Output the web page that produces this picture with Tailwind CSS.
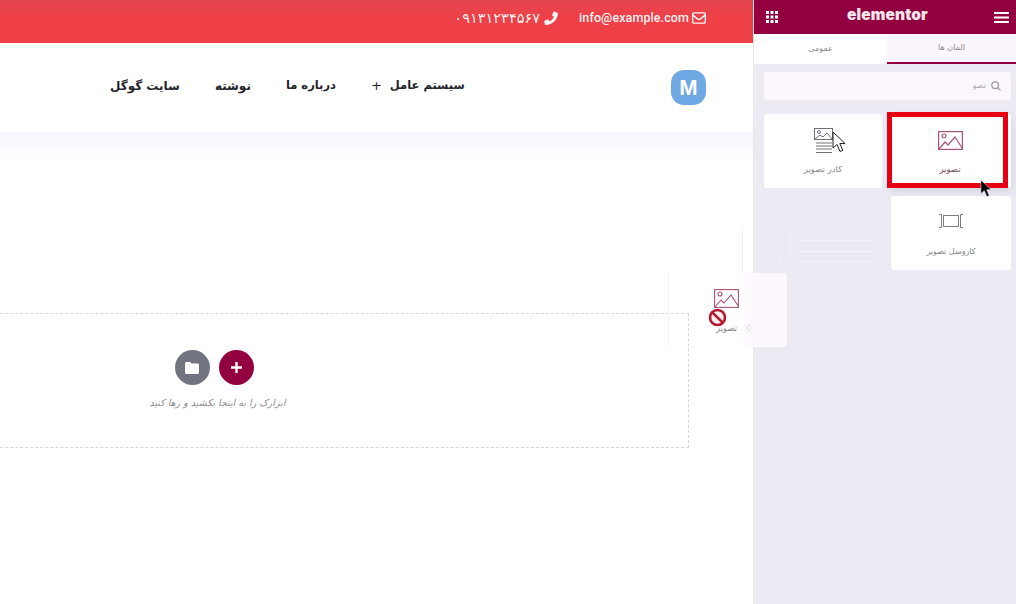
<!DOCTYPE html>
<html lang="fa">

<head>
  <meta charset="UTF-8">
  <meta name="viewport" content="width=device-width, initial-scale=1.0">
  <script src="https://cdn.jsdelivr.net/npm/@tailwindcss/browser@4"></script>
  <title>Elementor</title>
</head>

<body class="font-['DejaVu_Sans','Noto_Sans',sans-serif]">

  <div class="relative flex w-[1016px] h-[604px] overflow-hidden bg-white">

    <!-- page preview -->
    <main class="w-[753px] shrink-0 flex flex-col">
      <div class="h-[43px] shrink-0 flex items-center justify-end gap-[21px] pr-[47px] pb-[7px] bg-gradient-to-b from-[#e2454f] to-[#ef4047] to-[40%] text-white/95">
        <div class="flex items-center gap-[4px]">
          <span class="text-[14.5px] leading-none">۰۹۱۳۱۲۳۴۵۶۷</span>
          <svg class="w-[14px] h-[14px]" viewBox="0 0 24 24" fill="currentColor"><path d="M23 3.500 18 1c-.7-.3-1.400 0-1.700.6l-2.200 5c-.3.6-.1 1.200.4 1.600l2.500 2c-1.500 3.200-4.100 5.800-7.300 7.300l-2-2.500c-.4-.5-1-.7-1.600-.4l-5 2.200c-.6.3-.9 1-.6 1.700L1.600 23c.2.600.9 1 1.500 1C14.400 24 24 14.500 24 3.500c0-.1-.4 0-1 0z"/></svg>
        </div>
        <div class="flex items-center gap-[3px]">
          <span class="font-['Roboto',sans-serif] text-[12.5px] tracking-[0.1px] font-medium">info@example.com</span>
          <svg class="w-[14px] h-[12px]" viewBox="0 0 24 20" fill="none" stroke="currentColor" stroke-width="2.400"><rect x="1.200" y="1.200" width="21.600" height="17.600" rx="2"/><path d="M1.500 5l8 6.500c1.500 1.200 3.500 1.200 5 0l8-6.500"/></svg>
        </div>
      </div>

      <nav class="h-[89px] shrink-0 flex items-center justify-between pl-[110px] pr-[47px]">
        <div dir="rtl" class="flex items-center gap-[35px] text-[12px] font-bold text-[#24242c] pb-[3px]">
          <span class="flex items-center gap-[8px] text-[11.5px]">سیستم عامل<span class="font-normal text-[13px]">+</span></span>
          <span class="text-[11.5px]">درباره ما</span>
          <span>نوشته</span>
          <span>سایت گوگل</span>
        </div>
        <div class="w-[35px] h-[35px] flex items-center justify-center rounded-[13px] bg-[#6ea8e2] text-white text-[22px] font-bold font-['Liberation_Sans',sans-serif]">M</div>
      </nav>

      <div class="flex-1 bg-gradient-to-b from-[#f9f5fd] to-white to-[30px] pt-[181px]">
        <div class="-ml-[260px] w-[949px] h-[135px] border-r border-y border-dashed border-[#d5d7da] flex flex-col items-center pt-[36px]">
          <div class="flex items-center gap-[9px]">
            <div class="w-[35px] h-[35px] rounded-full bg-[#727580] flex items-center justify-center">
              <svg class="w-[14px] h-[12px]" viewBox="0 0 14 12" fill="white"><path d="M1.500 0h3.800l1.400 1.500h5.800c.8 0 1.500.7 1.500 1.500v7.500c0 .8-.7 1.500-1.500 1.500h-11C.7 12 0 11.300 0 10.500v-9C0 .7.700 0 1.500 0z"/></svg>
            </div>
            <div class="w-[35px] h-[35px] rounded-full bg-[#93003f] flex items-center justify-center">
              <svg class="w-[11px] h-[11px]" viewBox="0 0 11 11" fill="white"><path d="M4.300 0h2.400v4.300H11v2.400H6.700V11H4.300V6.700H0V4.300h4.300z"/></svg>
            </div>
          </div>
          <p dir="rtl" class="mt-[11px] ml-[7px] text-[9.5px] italic text-[#8a8a90]">ابزارک را به اینجا بکشید و رها کنید</p>
        </div>
      </div>
    </main>

    <!-- elementor panel -->
    <aside class="w-[263px] shrink-0 flex flex-col bg-[#ecebf4] border-l border-[#e6e6ec]">
      <header class="h-[34px] shrink-0 flex items-center justify-between pl-[12px] pr-[7px] bg-[#93003f] text-white">
        <svg class="w-[12px] h-[12px]" viewBox="0 0 12 12" fill="white"><path d="M0 0h3v3H0zM4.500 0h3v3h-3zM9 0h3v3H9zM0 4.500h3v3H0zM4.500 4.500h3v3h-3zM9 4.500h3v3H9zM0 9h3v3H0zM4.500 9h3v3h-3zM9 9h3v3H9z"/></svg>
        <span class="font-['Inter',sans-serif] text-[15.5px] font-black tracking-[0.1px] text-[#f3e6ec] -mt-[4px] ml-[3px]">elementor</span>
        <svg class="w-[15px] h-[11px]" viewBox="0 0 15 11" fill="white"><path d="M0 0h15v2H0zM0 4.500h15v2H0zM0 9h15v2H0z"/></svg>
      </header>

      <div dir="rtl" class="h-[30px] shrink-0 flex text-[8px] text-[#8a8a92]">
        <div class="w-[129px] flex items-center justify-center bg-[#fbf6fd] border-b-2 border-[#93003f]">المان ها</div>
        <div class="flex-1 flex items-center justify-center bg-white">عمومی</div>
      </div>

      <div class="mt-[8px] ml-[10px] mr-[5px] h-[28px] shrink-0 flex items-center justify-end gap-[5px] pr-[10px] rounded-[3px] bg-[#fcf7fd] text-[#a8a8b0]">
        <span dir="rtl" class="text-[8px]">تصو</span>
        <svg class="w-[10px] h-[10px]" viewBox="0 0 12 12" fill="none" stroke="#9b9ba3" stroke-width="1.500"><circle cx="5" cy="5" r="4"/><path d="M8 8l3.300 3.300"/></svg>
      </div>

      <div class="grid grid-cols-[118px_120px] gap-x-[9px] gap-y-[8px] ml-[10px] mt-[14px]">
        <div class="h-[74px] flex flex-col items-center rounded-[3px] bg-white pt-[14px] text-[#85858c]">
          <svg class="w-[20px] h-[26px] ml-[2px]" viewBox="0 0 20 26" fill="none" stroke="#6f7078" stroke-width="1"><rect x=".5" y=".5" width="18" height="11"/><circle cx="5" cy="4" r="1.500"/><path d="M1 11l5-4 3 2 4-4 5 6"/><path d="M2 15h16M2 18h16M2 21h16M2 24.500h16"/></svg>
          <span dir="rtl" class="mt-[9px] text-[8.5px]">کادر تصویر</span>
        </div>
        <div class="h-[74px] flex flex-col items-center rounded-[3px] bg-white pt-[17px] text-[#77777f] shadow-[0_3px_8px_rgba(60,60,90,0.15)]">
          <svg class="w-[25px] h-[19px] -ml-[2px]" viewBox="0 0 25 19" fill="none" stroke="#a8547a" stroke-width="1.200"><rect x=".6" y=".6" width="23.800" height="17.800"/><circle cx="6" cy="5" r="2"/><path d="M1 18l6-7 3 3 7-8 7.500 11.500"/></svg>
          <span dir="rtl" class="mt-[13px] -ml-[2px] text-[8.5px] text-[#6f4a5c]">تصویر</span>
        </div>

        <!-- faint widget left over from the drag -->
        <div class="h-[74px] flex items-stretch gap-[9px] pt-[34px] pb-[8px] pl-[6px] pr-[10px]">
          <div class="w-px bg-white/25"></div>
          <div class="w-px bg-white/25"></div>
          <div class="w-px bg-white/30"></div>
          <div class="flex-1 flex flex-col gap-[10px] pt-[10px]">
            <div class="h-px bg-white/40"></div>
            <div class="h-px bg-white/50"></div>
            <div class="h-px bg-white/40"></div>
          </div>
        </div>
        <div class="h-[74px] flex flex-col items-center rounded-[3px] bg-white pt-[18px] text-[#85858c]">
          <svg class="w-[24px] h-[14px]" viewBox="0 0 24 14" fill="none" stroke="#7d7d85" stroke-width="1"><rect x="4.500" y="1.500" width="15" height="11"/><path d="M0 .5h2.500v13H0M24 .5h-2.500v13H24"/></svg>
          <span dir="rtl" class="mt-[18px] text-[8px]">کاروسل تصویر</span>
        </div>
      </div>
    </aside>

    <!-- highlight drawn over the video frame -->
    <div class="absolute left-[887px] top-[112px] w-[121px] h-[76px] border-[5px] border-[#e60012]"></div>

    <!-- dragged element -->
    <div class="absolute left-[668px] top-[272px] w-px h-[74px] bg-[#f3f3f6]"></div>
    <div class="absolute left-[742px] top-[228px] w-px h-[44px] bg-[#f0f0f4]"></div>
    <div class="absolute left-[739px] top-[273px] w-[48px] h-[74px] rounded-[3px] bg-gradient-to-r from-white to-[#fdf8fe] to-[30%]"></div>
    <svg class="absolute left-[714px] top-[289px] w-[25px] h-[19px]" viewBox="0 0 25 19" fill="none" stroke="#a8547a" stroke-width="1.100"><rect x=".6" y=".6" width="23.800" height="17.800"/><circle cx="6" cy="5" r="2"/><path d="M1 18l6-7 3 3 7-8 7.500 11.500"/></svg>
    <span dir="rtl" class="absolute left-[716px] top-[322px] text-[8.5px] text-[#85858c]">تصویر</span>
    <svg class="absolute left-[745px] top-[323px] w-[6px] h-[9px]" viewBox="0 0 6 9" fill="none" stroke="#d8d4dc" stroke-width="1"><path d="M5 1L1.500 4.500 5 8"/></svg>
    <svg class="absolute left-[708px] top-[308px] w-[19px] h-[19px]" viewBox="0 0 19 19" fill="#f7eef0"><circle cx="9.500" cy="9.500" r="7.500" stroke="#b3172d" stroke-width="2.600"/><path d="M4.300 4.300l10.400 10.400" stroke="#b3172d" stroke-width="2.600"/></svg>

    <!-- pointers -->
    <svg class="absolute left-[832px] top-[131px] w-[14px] h-[22px]" viewBox="0 0 14 22" fill="white" stroke="#222" stroke-width="1"><path d="M1 1v16l4-3.500 3 7 2.800-1.200-3-6.800H13z"/></svg>
    <svg class="absolute left-[980px] top-[179px] w-[12px] h-[19px]" viewBox="0 0 14 22" fill="#000" stroke="#fff" stroke-width=".6"><path d="M1 1v16l4-3.500 3 7 2.800-1.200-3-6.800H13z"/></svg>
  </div>

</body>

</html>
